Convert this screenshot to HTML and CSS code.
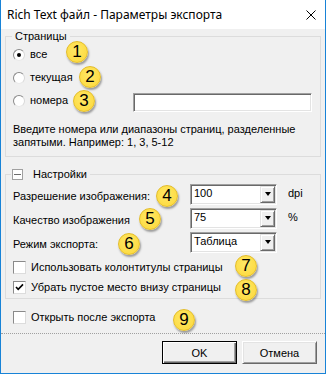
FILE: index.html
```html
<!DOCTYPE html>
<html>
<head>
<meta charset="utf-8">
<link rel="stylesheet" href="styles.css">
</head>
<body>
<div class="window">
  <div class="titlebar">
    <span class="title">Rich Text файл - Параметры экспорта</span>
    <svg class="close" viewBox="0 0 10 10" width="10" height="10"><path d="M0.5 0.5 L9.5 9.5 M9.5 0.5 L0.5 9.5" stroke="#000" stroke-width="1" fill="none"/></svg>
  </div>
  <div class="content">
    <fieldset class="group pages">
      <legend class="legend">Страницы</legend>
      <div class="inner">
        <div class="radio-row"><span class="radio checked"></span><span class="text">все</span></div>
        <div class="radio-row"><span class="radio"></span><span class="text">текущая</span></div>
        <div class="radio-row"><span class="radio"></span><span class="text">номера</span><span class="textbox"></span></div>
        <p class="hint">Введите номера или диапазоны страниц, разделенные<br>запятыми. Например: 1, 3, 5-12</p>
      </div>
    </fieldset>
    <fieldset class="group settings">
      <legend class="legend legend-tree"><span class="minus"></span>Настройки</legend>
      <div class="inner">
        <div class="field-row"><span class="label">Разрешение изображения:</span><span class="combo"><span class="combo-text">100</span><span class="combo-btn"><span class="arrow"></span></span></span><span class="unit">dpi</span></div>
        <div class="field-row"><span class="label">Качество изображения</span><span class="combo"><span class="combo-text">75</span><span class="combo-btn"><span class="arrow"></span></span></span><span class="unit">%</span></div>
        <div class="field-row"><span class="label">Режим экспорта:</span><span class="combo"><span class="combo-text">Таблица</span><span class="combo-btn"><span class="arrow"></span></span></span></div>
        <div class="check-row first"><span class="checkbox"></span><span class="text">Использовать колонтитулы страницы</span></div>
        <div class="check-row"><span class="checkbox"><svg viewBox="0 0 11 11" width="11" height="11"><path d="M2 5 L4.2 7.4 L9 2.4" stroke="#000" stroke-width="1.6" fill="none"/></svg></span><span class="text">Убрать пустое место внизу страницы</span></div>
      </div>
    </fieldset>
    <div class="check-row outside"><span class="checkbox"></span><span class="text">Открыть после экспорта</span></div>
    <div class="separator"></div>
    <div class="buttons">
      <button class="btn default">OK</button>
      <button class="btn">Отмена</button>
    </div>
  </div>
  <span class="badge b1">1</span>
  <span class="badge b2">2</span>
  <span class="badge b3">3</span>
  <span class="badge b4">4</span>
  <span class="badge b5">5</span>
  <span class="badge b6">6</span>
  <span class="badge b7">7</span>
  <span class="badge b8">8</span>
  <span class="badge b9">9</span>
</div>
</body>
</html>
```
FILE: styles.css
```css
* { box-sizing: border-box; }
html, body { margin: 0; padding: 0; background: #fff; }
body {
  width: 328px; height: 375px; overflow: hidden;
  font-family: "Liberation Sans", Arial, sans-serif;
  font-size: 11px; color: #000;
}
.window {
  position: relative;
  width: 326px; height: 374px;
  border: 1px solid #1883d7; border-top: none;
  background: #f0f0f0;
  display: flex; flex-direction: column;
}
.titlebar {
  height: 29px; flex: none;
  background: #fff;
  display: flex; align-items: center; justify-content: space-between;
  padding-left: 6px;
}
.title { font-family: "Noto Sans", sans-serif; font-size: 12px; line-height: 16px; color: #000; }
.close { margin-right: 9px; display: block; }

.content { display: flex; flex-direction: column; }

.group {
  margin: 1px 4px 0; padding: 0;
  border: 1px solid #dcdcdc;
  min-inline-size: 0;
}
.legend {
  margin-left: 6px; padding: 0 3px;
  line-height: 13px; font-size: 11px;
}
.legend-tree { margin-left: 5px; padding: 0 3px 0 1px; display: flex; align-items: center; }
.minus {
  width: 11px; height: 11px; margin-right: 10px;
  border: 1px solid #a0a0a0; background: #fff;
  position: relative;
  display: flex; align-items: center; justify-content: center;
}
.minus::before { content: ""; width: 7px; height: 1px; background: #6d6d6d; }

.inner { padding-left: 7px; }

.radio-row { height: 23px; display: flex; align-items: center; }
.radio {
  width: 12px; height: 12px; border-radius: 50%;
  border: 1px solid; border-color: #8a8a8a #d8d8d8 #e8e8e8 #8a8a8a;
  background: #fff; margin-right: 5px; flex: none;
  display: flex; align-items: center; justify-content: center;
}
.radio.checked::before { content: ""; width: 4px; height: 4px; border-radius: 50%; background: #000; }
.text { line-height: 13px; }
.textbox {
  margin-left: auto; margin-right: 8px; align-self: flex-end;
  width: 179px; height: 19px; background: #fff;
  border: 1px solid; border-color: #a0a0a0 #fff #fff #a0a0a0;
  box-shadow: inset 1px 1px 0 #696969, inset -1px -1px 0 #e3e3e3;
}
.hint { margin: 11px 0 7px; line-height: 13px; }

.settings { margin-top: 11px; }
.settings .inner { padding-top: 1px; }
.field-row { height: 24px; display: flex; align-items: center; }
.label { width: 177px; flex: none; line-height: 13px; margin-top: 4px; }
.combo {
  width: 87px; height: 21px; flex: none;
  background: #fff; display: flex; align-items: center;
  border: 1px solid; border-color: #a0a0a0 #fff #fff #a0a0a0;
  box-shadow: inset 1px 1px 0 #696969, inset -1px -1px 0 #e3e3e3;
  padding: 1px 1px 1px 2px;
}
.combo-text { flex: 1; line-height: 13px; padding-left: 1px; margin-top: -1px; }
.combo-btn {
  width: 15px; height: 17px; flex: none;
  background: #f0f0f0;
  border: 1px solid; border-color: #e3e3e3 #696969 #696969 #e3e3e3;
  box-shadow: inset 1px 1px 0 #fff, inset -1px -1px 0 #a0a0a0;
  display: flex; align-items: center; justify-content: center;
}
.arrow {
  width: 0; height: 0;
  border-left: 3.5px solid transparent; border-right: 3.5px solid transparent;
  border-top: 4px solid #000;
}
.unit { margin-left: 11px; line-height: 13px; margin-top: -2px; }

.check-row { height: 20px; display: flex; align-items: center; }
.check-row.first { margin-top: 3px; }
.settings .check-row:last-child { margin-bottom: 1px; }
.checkbox {
  width: 13px; height: 13px; flex: none; margin-right: 5px;
  background: #fff;
  border: 1px solid; border-color: #8a8a8a #dcdcdc #dcdcdc #8a8a8a;
  display: flex; align-items: center; justify-content: center;
}
.checkbox svg { display: block; }
.outside { margin: 8px 0 0 12px; }

.separator { margin-top: 6px; border-top: 1px dotted #a0a0a0; height: 0; }

.buttons { display: flex; justify-content: flex-end; gap: 5px; padding-right: 8px; margin-top: 7px; }
.btn {
  width: 75px; height: 23px; padding: 0;
  font-family: "Liberation Sans", Arial, sans-serif; font-size: 11px; color: #000;
  background: #f0f0f0;
  border: 1px solid; border-color: #fff #696969 #696969 #fff;
  box-shadow: inset 1px 1px 0 #e3e3e3, inset -1px -1px 0 #a0a0a0;
}
.btn.default {
  border-color: #000;
  box-shadow: inset 1px 1px 0 #fff, inset -1px -1px 0 #696969, inset -2px -2px 0 #a0a0a0;
}

.badge {
  position: absolute;
  width: 22px; height: 22px; border-radius: 50%;
  background: radial-gradient(circle at 45% 40%, #ffe866 0%, #fddc45 70%, #f2cc2e 100%);
  border: 1px solid #e3bd2a;
  box-shadow: 1px 2px 2px rgba(0,0,0,0.35);
  font-family: "Liberation Sans", Arial, sans-serif; font-size: 17px; line-height: 20px;
  text-align: center; color: #000;
}
.b1 { left: 65px; top: 41px; }
.b2 { left: 78px; top: 66px; }
.b3 { left: 72px; top: 90px; }
.b4 { left: 155px; top: 185px; }
.b5 { left: 138px; top: 208px; }
.b6 { left: 117px; top: 233px; }
.b7 { left: 234px; top: 255px; }
.b8 { left: 234px; top: 279px; }
.b9 { left: 172px; top: 309px; }
```
